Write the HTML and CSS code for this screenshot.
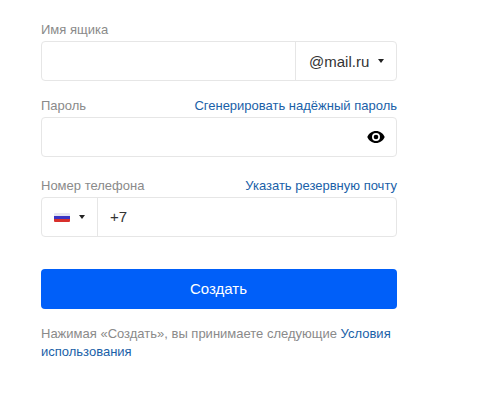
FILE: index.html
```html
<!DOCTYPE html>
<html lang="ru">
  <head>
    <meta charset="UTF-8" />
    <title>Создать ящик</title>
    <link rel="stylesheet" href="styles.css">
  </head>
  <body>
    <form class="form">
      <div class="field field-first">
        <div class="field-head">
          <span class="label">Имя ящика</span>
        </div>
        <div class="box">
          <div class="box-main"></div>
          <div class="domain">
            <span>@mail.ru</span>
            <span class="arrow"></span>
          </div>
        </div>
      </div>

      <div class="field field-password">
        <div class="field-head">
          <span class="label">Пароль</span>
          <a class="link" href="#">Сгенерировать надёжный пароль</a>
        </div>
        <div class="box">
          <div class="box-main"></div>
          <svg class="eye" width="18" height="12" viewBox="0 0 18 12">
            <path fill="#000" fill-rule="evenodd" d="M9 0C5 0 1.800 2.400 0.300 6 1.800 9.600 5 12 9 12s7.200-2.400 8.700-6C16.200 2.400 13 0 9 0zm0 10a4 4 0 1 1 0-8 4 4 0 0 1 0 8z" />
            <circle cx="9" cy="6" r="2.300" fill="#000" />
          </svg>
        </div>
      </div>

      <div class="field field-phone">
        <div class="field-head">
          <span class="label">Номер телефона</span>
          <a class="link" href="#">Указать резервную почту</a>
        </div>
        <div class="box">
          <div class="country">
            <span class="flag"></span>
            <span class="arrow"></span>
          </div>
          <div class="phone">+7</div>
        </div>
      </div>

      <button class="btn" type="button">Создать</button>

      <p class="terms">Нажимая «Создать», вы принимаете следующие <a class="link-terms" href="#">Условия использования</a></p>
    </form>
  </body>
</html>
```

FILE: styles.css
```css
html,
body {
  margin: 0;
  background-color: #fff;
}

body {
  font-family: "Liberation Sans", Arial, sans-serif;
}

.form {
  width: 356px;
  padding: 20px 0 0 41px;
}

.field-password {
  margin-top: 15px;
}

.field-phone {
  margin-top: 19px;
}

.field-head {
  display: flex;
  justify-content: space-between;
  align-items: center;
  height: 19px;
  padding-bottom: 2px;
  font-size: 13px;
}

.label {
  color: #8a8a8a;
}

.link {
  color: #1a5fa8;
  text-decoration: none;
}

.box {
  display: flex;
  align-items: center;
  box-sizing: border-box;
  height: 40px;
  border: 1px solid #e6e6e6;
  border-radius: 4px;
  background-color: #fff;
}

.box-main {
  flex: 1;
}

.domain {
  display: flex;
  align-items: center;
  box-sizing: border-box;
  width: 101px;
  height: 100%;
  padding-left: 13px;
  border-left: 1px solid #e6e6e6;
  font-size: 15px;
  color: #333;
}

.arrow {
  width: 0;
  height: 0;
  border-top: 4px solid #222;
  border-left: 3.500px solid transparent;
  border-right: 3.500px solid transparent;
}

.domain .arrow {
  margin-left: 9px;
}

.eye {
  margin-right: 11px;
}

.country {
  display: flex;
  align-items: center;
  box-sizing: border-box;
  width: 56px;
  height: 100%;
  padding-left: 12px;
  border-right: 1px solid #e6e6e6;
}

.country .arrow {
  margin-left: 9px;
}

.flag {
  width: 16px;
  height: 9px;
  border-radius: 1px;
  background: linear-gradient(#e4e4f0 0 30%, #3a35c4 30% 65%, #d8302c 65% 100%);
}

.phone {
  padding: 0 0 1px 12px;
  font-size: 15px;
  color: #333;
}

.btn {
  display: block;
  width: 100%;
  height: 40px;
  margin-top: 32px;
  padding: 0 1px 1px 0;
  border: none;
  border-radius: 4px;
  background-color: #005ff9;
  color: #fff;
  font-family: inherit;
  font-size: 15px;
}

.terms {
  margin: 16px 0 0;
  font-size: 13px;
  line-height: 18px;
  color: #8a8a8a;
}

.link-terms {
  color: #1a5fa8;
  text-decoration: none;
}
```
